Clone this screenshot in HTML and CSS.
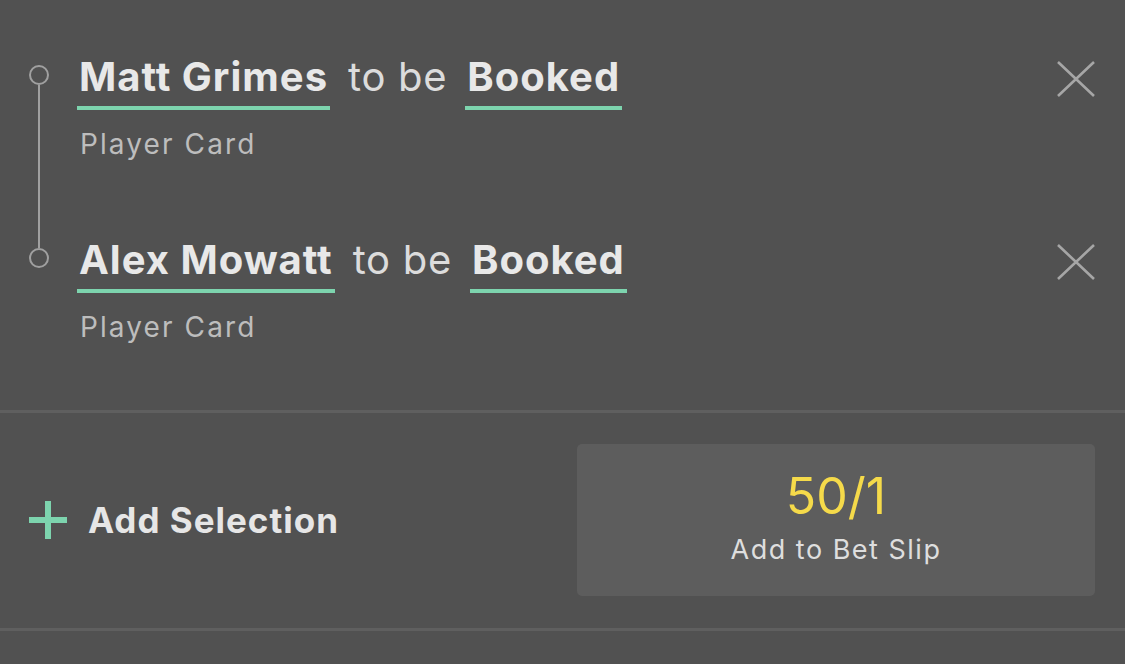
FILE: index.html
```html
<!DOCTYPE html>
<html lang="en">
<head>
<meta charset="utf-8">
<title>Bet Builder</title>
<link rel="stylesheet" href="styles.css">
</head>
<body>
<div class="panel">
  <section class="legs">
    <div class="leg leg-first">
      <div class="rail">
        <span class="line line-top"></span>
        <span class="node"></span>
        <span class="line line-bottom"></span>
      </div>
      <div class="body">
        <div class="title">
          <span class="pick">Matt Grimes</span>
          <span class="joiner">to be</span>
          <span class="pick">Booked</span>
          <button class="remove" aria-label="Remove">
            <svg viewBox="0 0 38 36" width="38" height="36"><path d="M1 1L37 35M37 1L1 35" stroke="#a6a6a6" stroke-width="2.6" fill="none"/></svg>
          </button>
        </div>
        <div class="market">Player Card</div>
      </div>
    </div>
    <div class="leg leg-last">
      <div class="rail">
        <span class="line line-top"></span>
        <span class="node"></span>
        <span class="line line-bottom"></span>
      </div>
      <div class="body">
        <div class="title">
          <span class="pick">Alex Mowatt</span>
          <span class="joiner">to be</span>
          <span class="pick">Booked</span>
          <button class="remove" aria-label="Remove">
            <svg viewBox="0 0 38 36" width="38" height="36"><path d="M1 1L37 35M37 1L1 35" stroke="#a6a6a6" stroke-width="2.6" fill="none"/></svg>
          </button>
        </div>
        <div class="market">Player Card</div>
      </div>
    </div>
  </section>
  <section class="actions">
    <div class="add-selection">
      <svg class="plus" viewBox="0 0 38 38" width="38" height="38"><path d="M19 0V38M0 19H38" stroke="#7dd4ae" stroke-width="6" fill="none"/></svg>
      <span>Add Selection</span>
    </div>
    <button class="slip">
      <span class="odds">50/1</span>
      <span class="slip-label">Add to Bet Slip</span>
    </button>
  </section>
</div>
</body>
</html>
```

FILE: styles.css
```css
html, body {
  margin: 0;
  padding: 0;
  background: #515151;
}

body {
  font-family: Inter, "Noto Sans", "Liberation Sans", sans-serif;
  color: #e6e6e6;
  width: 1125px;
  height: 664px;
  overflow: hidden;
}

.panel {
  display: flex;
  flex-direction: column;
}

.legs {
  padding-top: 55px;
  padding-bottom: 66px;
  border-bottom: 3px solid #5f5f5f;
  display: flex;
  flex-direction: column;
}

.leg {
  display: flex;
  align-items: stretch;
}

.rail {
  width: 20px;
  margin-left: 29px;
  margin-right: 29px;
  display: flex;
  flex-direction: column;
  align-items: center;
}

.node {
  width: 16px;
  height: 16px;
  border: 2.4px solid #a0a0a0;
  border-radius: 50%;
  flex: none;
}

.line {
  width: 2.4px;
  background: #a0a0a0;
}

.line-top {
  height: 10px;
  flex: none;
}

.line-bottom {
  flex: 1;
}

.leg-first .line-top,
.leg-last .line-bottom {
  background: transparent;
}

.body {
  flex: 1;
  display: flex;
  flex-direction: column;
  padding-right: 30px;
}

.leg-first .body {
  padding-bottom: 77px;
}

.title {
  display: flex;
  align-items: flex-start;
  gap: 18px;
  font-size: 40px;
  line-height: 44px;
  margin-left: -1px;
}

.pick {
  font-weight: 700;
  color: #e8e8e8;
  padding: 0 2px 7px 2px;
  border-bottom: 4px solid #7dd4ae;
  letter-spacing: 1px;
}

.joiner {
  font-weight: 400;
  color: #dcdcdc;
  letter-spacing: 0.7px;
}

.remove {
  margin-left: auto;
  margin-top: 6px;
  padding: 0;
  border: 0;
  background: none;
  width: 38px;
  height: 36px;
  display: flex;
}

.market {
  margin-top: 17px;
  margin-left: 2px;
  font-size: 28px;
  line-height: 34px;
  color: #bdbdbd;
  letter-spacing: 2.1px;
}

.actions {
  display: flex;
  align-items: center;
  justify-content: space-between;
  padding: 31px 30px 32px 29px;
  border-bottom: 3px solid #5f5f5f;
}

.add-selection {
  display: flex;
  align-items: center;
  gap: 21px;
  font-size: 35px;
  font-weight: 700;
  color: #e6e6e6;
  letter-spacing: 1px;
}

.plus {
  flex: none;
}

.slip {
  width: 518px;
  height: 152px;
  border: 0;
  border-radius: 5px;
  background: #5d5d5d;
  font-family: inherit;
  display: flex;
  flex-direction: column;
  align-items: center;
  justify-content: flex-start;
  padding: 24px 0 0;
}

.odds {
  font-size: 50px;
  line-height: 56px;
  color: #f5da4a;
  font-weight: 400;
}

.slip-label {
  font-size: 27px;
  line-height: 34px;
  margin-top: 9px;
  color: #dedede;
  letter-spacing: 1.5px;
}
```
